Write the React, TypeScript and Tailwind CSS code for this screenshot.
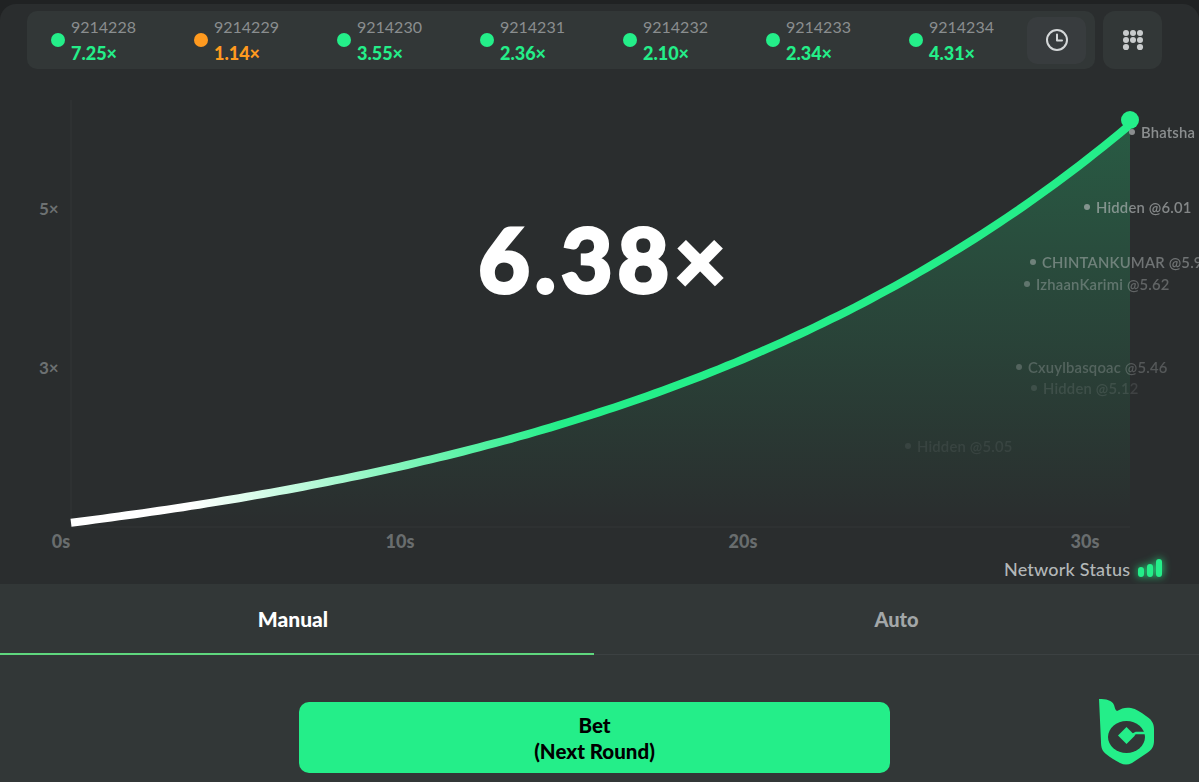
import { Fragment } from "react";

const rounds = [
  { id: "9214228", value: "7.25×", hot: true },
  { id: "9214229", value: "1.14×", hot: false },
  { id: "9214230", value: "3.55×", hot: true },
  { id: "9214231", value: "2.36×", hot: true },
  { id: "9214232", value: "2.10×", hot: true },
  { id: "9214233", value: "2.34×", hot: true },
  { id: "9214234", value: "4.31×", hot: true },
];

const cashouts = [
  { name: "Bhatsha", dotX: 1132, y: 132, dim: "opacity-70" },
  { name: "Hidden @6.01", dotX: 1087, y: 207, dim: "opacity-65" },
  { name: "CHINTANKUMAR @5.92", dotX: 1033, y: 262, dim: "opacity-50" },
  { name: "IzhaanKarimi @5.62", dotX: 1027, y: 284, dim: "opacity-40" },
  { name: "Cxuylbasqoac @5.46", dotX: 1019, y: 367, dim: "opacity-30" },
  { name: "Hidden @5.12", dotX: 1034, y: 388, dim: "opacity-15" },
  { name: "Hidden @5.05", dotX: 908, y: 446, dim: "opacity-10" },
];

const yLabels = [
  { text: "5×", y: 209 },
  { text: "3×", y: 368 },
];

const xLabels = [
  { text: "0s", x: 61 },
  { text: "10s", x: 400 },
  { text: "20s", x: 743 },
  { text: "30s", x: 1085 },
];

// exponential fit of the multiplier curve, in page pixels
function curvePoints(): string[] {
  const pts: string[] = [];
  for (let x = 71; x <= 1130; x += 8) {
    const y = 522.7 - 69.5 * (Math.exp(0.0018 * (x - 71)) - 1);
    pts.push(`${x} ${y.toFixed(1)}`);
  }
  pts.push("1130 120");
  return pts;
}

function Chart() {
  const line = "M" + curvePoints().join(" L");
  return (
    <svg className="absolute left-0 top-0" width={1199} height={584}>
      <defs>
        <linearGradient id="stroke" gradientUnits="userSpaceOnUse" x1="190" y1="0" x2="560" y2="0">
          <stop offset="0" stopColor="#ffffff" />
          <stop offset="1" stopColor="#24ee89" />
        </linearGradient>
        <linearGradient id="fill" gradientUnits="userSpaceOnUse" x1="0" y1="120" x2="0" y2="527">
          <stop offset="0" stopColor="#24ee89" stopOpacity="0.24" />
          <stop offset="0.55" stopColor="#24ee89" stopOpacity="0.11" />
          <stop offset="1" stopColor="#24ee89" stopOpacity="0" />
        </linearGradient>
      </defs>
      <path d="M71 100V527H1130" fill="none" stroke="#323637" strokeWidth="1" />
      <path d={`${line} L1130 527 L71 527 Z`} fill="url(#fill)" />
      <path d={line} fill="none" stroke="url(#stroke)" strokeWidth="8" />
      <circle cx="1130" cy="120" r="9" fill="#24ee89" />
    </svg>
  );
}

function CashoutLabels() {
  return (
    <Fragment>
      {cashouts.map((c) => (
        <div
          key={c.name}
          className={`absolute flex items-center gap-[6px] whitespace-nowrap text-[14.8px] font-semibold tracking-[0.2px] text-[#b4b8b9] ${c.dim}`}
          style={{ left: c.dotX - 3, top: c.y - 10, height: 20 }}
        >
          <span className="h-[6px] w-[6px] rounded-full bg-[#b4b8b9]" />
          <span>{c.name}</span>
        </div>
      ))}
    </Fragment>
  );
}

function Logo() {
  return (
    <svg width="58" height="68" viewBox="0 0 58 68" className="shrink-0">
      <path
        d="M1 1C8 1 14 2 16 7C17 10 17 12 19 13C24 10 28 9 33 10C38 11 43 14 48 18C53 21 56 25 56 31V43C56 48 54 52 49 55C44 58 39 62 34 65C30 67 26 67 22 65C17 62 13 60 8 56C4 53 3 49 3 44Z"
        fill="#24ee89"
      />
      <ellipse cx="28.5" cy="39" rx="18.5" ry="16" fill="#323737" />
      <path d="M28.5 29L37 37.5L28.5 46L20 37.5Z" fill="#24ee89" />
      <path d="M34 37L38 35H48" fill="none" stroke="#24ee89" strokeWidth="2.5" />
    </svg>
  );
}

function ClockIcon() {
  return (
    <svg width="24" height="24" viewBox="0 0 24 24" fill="none" stroke="#d4d7d8" strokeWidth="2" strokeLinecap="round" strokeLinejoin="round">
      <circle cx="12" cy="12" r="10" />
      <path d="M12 6.5V12.5H17" />
    </svg>
  );
}

function DotsIcon() {
  return (
    <svg width="22" height="22" viewBox="0 0 22 22" fill="#c8cbcc">
      <circle cx="4" cy="4" r="3" />
      <circle cx="11" cy="4" r="3" />
      <circle cx="18" cy="4" r="3" />
      <circle cx="4" cy="11" r="3" />
      <circle cx="11" cy="11" r="3" />
      <circle cx="18" cy="11" r="3" />
      <circle cx="4" cy="18" r="3.1" />
      <circle cx="18" cy="18" r="3.1" />
    </svg>
  );
}

export default function App() {
  return (
    <div className="h-[782px] w-[1199px] overflow-hidden bg-[#202223] pt-[4px] font-['Lato',sans-serif]">
      <div className="relative h-[580px] overflow-hidden rounded-t-[16px] bg-[#2a2d2e]">
        <div className="absolute left-0 top-[-4px] h-[584px] w-[1199px]">
          <Chart />
          <CashoutLabels />
          {yLabels.map((l) => (
            <span
              key={l.text}
              className="absolute left-[39px] text-[17px] font-bold leading-none text-[#6d7172]"
              style={{ top: l.y - 9 }}
            >
              {l.text}
            </span>
          ))}
          {xLabels.map((l) => (
            <span
              key={l.text}
              className="absolute -translate-x-1/2 text-[18px] font-black leading-none text-[#696d6e]"
              style={{ left: l.x, top: 532 }}
            >
              {l.text}
            </span>
          ))}
          <div className="absolute left-0 top-[223px] w-[1209px] text-center text-[89px] font-black leading-[72px] tracking-[5px] text-white [-webkit-text-stroke:3px_white]">
            6.38×
          </div>
          <div className="absolute left-[1004px] top-[558px] flex items-center gap-[8px]">
            <span className="text-[18px] font-medium leading-[22px] tracking-[0.2px] text-[#b3b7b8]">Network Status</span>
            <div className="mb-[3px] flex items-end gap-[3px] drop-shadow-[0_0_4px_#24ee89]">
              <span className="h-[10px] w-[6px] rounded-[3px] bg-[#24ee89]" />
              <span className="h-[13px] w-[6px] rounded-[3px] bg-[#24ee89]" />
              <span className="h-[18px] w-[6px] rounded-[3px] bg-[#24ee89]" />
            </div>
          </div>
        </div>
        <div className="relative flex items-center gap-[8px] pl-[27px] pt-[7px]">
          <div className="flex h-[58px] w-[1068px] items-center rounded-[10px] bg-[#323737] pl-[24px]">
            {rounds.map((r) => (
              <div key={r.id} className="flex w-[143px] shrink-0 items-center gap-[6px]">
                <span className={`h-[14px] w-[14px] rounded-full ${r.hot ? "bg-[#24ee89]" : "bg-[#ff9a1f]"}`} />
                <div className="flex flex-col">
                  <span className="text-[16px] leading-[26px] text-[#8a8e8f]">{r.id}</span>
                  <span className={`text-[18px] font-black leading-[26px] ${r.hot ? "text-[#24ee89]" : "text-[#ff9a1f]"}`}>
                    {r.value}
                  </span>
                </div>
              </div>
            ))}
            <div className="-ml-[25px] flex h-[47px] w-[59px] shrink-0 items-center justify-center rounded-[10px] bg-[#383c3e]">
              <ClockIcon />
            </div>
          </div>
          <div className="flex h-[58px] w-[59px] items-center justify-center rounded-[12px] bg-[#323737]">
            <DotsIcon />
          </div>
        </div>
      </div>
      <div className="h-[198px] bg-[#323737]">
        <div className="flex h-[71px] border-b border-[#3c4142]">
          <div className="relative flex w-[594px] items-center justify-center pr-[8px] text-[21px] font-black text-white">
            Manual
            <span className="absolute bottom-[-1px] left-0 h-[2px] w-full bg-[#5fd77e]" />
          </div>
          <div className="flex flex-1 items-center justify-center text-[20px] font-black text-[#a3a7a8]">Auto</div>
        </div>
        <div className="relative flex justify-center pr-[10px] pt-[47px]">
          <button className="flex h-[71px] w-[591px] flex-col items-center justify-center rounded-[10px] bg-[#24ee89] text-[20.5px] font-black leading-[26px] text-black">
            <span>Bet</span>
            <span>(Next Round)</span>
          </button>
          <div className="absolute left-[1098px] top-[43px]">
            <Logo />
          </div>
        </div>
      </div>
    </div>
  );
}
